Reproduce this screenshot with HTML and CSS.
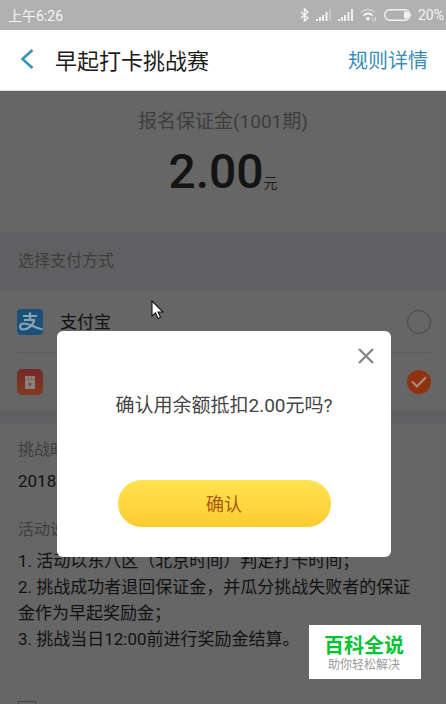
FILE: index.html
```html
<!DOCTYPE html>
<html lang="zh-CN">
<head>
<meta charset="utf-8">
<meta name="viewport" content="width=device-width, initial-scale=1">
<title>早起打卡挑战赛</title>
<link rel="stylesheet" href="styles.css">
</head>
<body>
<div class="status">
  <span class="status-time">上午6:26</span>
  <div class="status-icons">
    <svg width="10" height="14" viewBox="0 0 10 14" fill="none" stroke="#f2f2f2" stroke-width="1.5"><path d="M1 4l7 6-3.500 3V1L8 4l-7 6"/></svg>
    <svg width="16" height="12" viewBox="0 0 16 12" fill="#f2f2f2"><path d="M0 10h2v2H0zM3 8h2v4H3zM6 6h2v6H6z"/><path d="M9.500 3h2v9h-2z"/><path opacity=".35" d="M13 0h2v12h-2z"/></svg>
    <svg width="16" height="12" viewBox="0 0 16 12" fill="#f2f2f2"><path d="M0 10h2v2H0zM3 8h2v4H3zM6 6h2v6H6zM9.500 3h2v9h-2zM13 0h2v12h-2z"/></svg>
    <svg width="18" height="14" viewBox="0 0 18 14" fill="none" stroke="#f2f2f2" stroke-width="1.700"><path opacity=".4" d="M1 4.500Q8 -1.500 15 4.500"/><path d="M3.500 7.500Q8 3.500 12.500 7.500"/><path fill="#f2f2f2" stroke="none" d="M5.500 10Q8 8 10.500 10L8 13z"/><path opacity=".7" stroke-width="1" d="M13 9.500v4M12 12.500l1 1M15.500 13V9.500M15.500 9.500l1 1"/></svg>
    <svg width="28" height="12" viewBox="0 0 28 12"><rect x=".8" y=".8" width="25" height="10.400" rx="5" fill="none" stroke="#f2f2f2" stroke-width="1.400"/><path fill="#f2f2f2" d="M20 2.500h2q3 0 3 3.500t-3 3.500h-2zM26.500 4q1.500 2 0 4z"/></svg>
    <span>20%</span>
  </div>
</div>
<header class="nav">
  <button class="back" aria-label="返回"><svg width="14" height="20" viewBox="0 0 14 20" fill="none" stroke="#3a94b8" stroke-width="2.600"><path d="M12.500 1L2.500 10l10 9"/></svg></button>
  <h1 class="title">早起打卡挑战赛</h1>
  <a class="details" href="#rules">规则详情</a>
</header>
<main class="page">
  <section class="deposit">
    <p class="deposit-label">报名保证金(1001期)</p>
    <p class="deposit-sum"><strong>2.00</strong><span>元</span></p>
  </section>
  <h2 class="band">选择支付方式</h2>
  <div class="methods">
    <label class="method">
      <svg class="logo" width="26" height="26" viewBox="0 0 26 26"><rect width="26" height="26" rx="4" fill="#1b5179"/><g fill="none" stroke="#8ba4b4" stroke-width="2.200"><path d="M6 7h14M13 3.500V11M7 11h11"/><path d="M17.500 11C16 16 11 20.500 6.500 20.500C1.500 20.500 2 14.500 7 14.500C12 14.500 17 18.500 25.500 20.500"/></g></svg>
      <span class="method-name">支付宝</span>
      <input class="pick" type="radio" name="pay">
    </label>
    <label class="method">
      <svg class="logo" width="26" height="26" viewBox="0 0 26 26"><defs><linearGradient id="red" x2="0" y2="1"><stop stop-color="#74292a"/><stop offset="1" stop-color="#813b20"/></linearGradient></defs><rect width="26" height="26" rx="5" fill="url(#red)"/><path fill="#8c807e" d="M8 7h10v13H8z"/><path stroke="#84635f" stroke-width="1" d="M8 10.500h10M11.500 7v4M14.500 7v4"/><path fill="#744a42" d="M11.500 14h3v2h-1v1.500h-1V16h-1z"/></svg>
      <input class="pick" type="radio" name="pay" aria-label="余额" checked>
    </label>
  </div>
  <section class="info" id="rules">
    <h2 class="info-label">挑战时间</h2>
    <p class="info-text">2018.</p>
    <h2 class="info-label info-next">活动说明</h2>
    <p class="info-text">1. 活动以东八区（北京时间）判定打卡时间；<br>2. 挑战成功者退回保证金，并瓜分挑战失败者的保证金作为早起奖励金；<br>3. 挑战当日12:00前进行奖励金结算。</p>
    <input class="agree" type="checkbox" aria-label="同意">
  </section>
</main>
<div class="layer">
  <div class="dialog" role="dialog" aria-modal="true">
    <button class="close" aria-label="关闭"><svg width="16" height="16" viewBox="0 0 16 16" stroke="#888" stroke-width="2.400"><path d="M1 1l14 14M15 1L1 15"/></svg></button>
    <p class="question">确认用余额抵扣2.00元吗?</p>
    <button class="confirm">确认</button>
  </div>
</div>
<aside class="mark"><strong>百科全说</strong><span>助你轻松解决</span></aside>
<svg class="cursor" width="13" height="20" viewBox="0 0 13 20"><path d="M1 1v15l3.500-3.200L7 18.500l2.500-1.200L7 12h5z" fill="#fff" stroke="#111" stroke-width="1.100"/></svg>
</body>
</html>
```

FILE: styles.css
```css
* { box-sizing: border-box; margin: 0; padding: 0; }

body {
  height: 100vh;
  overflow: hidden;
  display: flex;
  flex-direction: column;
  background: #666;
  font-family: Roboto, "Noto Sans CJK SC", sans-serif;
  color: #1c1c1c;
}

h1, h2 { font-weight: 400; }
button { border: 0; background: none; font: inherit; cursor: pointer; }
svg { display: block; flex: none; }

.status {
  flex: none;
  height: 30px;
  padding: 0 2px 0 8px;
  display: flex;
  align-items: center;
  justify-content: space-between;
  background: #b0b0b0;
  color: #f5f5f5;
  font-size: 14px;
}
.status-icons { display: flex; align-items: center; gap: 6px; }

.nav {
  flex: none;
  height: 61px;
  padding: 0 18px 2px 20px;
  display: flex;
  align-items: center;
  background: #fff;
  border-bottom: 1px solid #ddd;
}
.back { width: 35px; height: 40px; display: flex; align-items: center; }
.title { flex: 1; font-size: 22px; }
.details { color: #3a8db5; font-size: 20px; text-decoration: none; }

.page { flex: 1; overflow: hidden; }

.deposit { height: 141px; padding-top: 17px; text-align: center; }
.deposit-label { font-size: 19px; line-height: 28px; color: #3d3d3d; }
.deposit-sum { line-height: 72px; }
.deposit-sum strong { font-size: 48px; font-weight: 500; color: #141414; }
.deposit-sum span { font-size: 14px; }

.band {
  height: 59px;
  padding: 0 18px;
  background: #606063;
  color: #3d3d3d;
  font-size: 16px;
  line-height: 58px;
}

.methods { padding: 0 15px 0 17px; border-bottom: 14px solid #606063; }
.method { height: 61px; display: flex; align-items: center; }
.method + .method { height: 58px; border-top: 1px solid #5a5a5a; }
.method-name { margin-left: 17px; padding-bottom: 2px; font-size: 17px; color: #111; }
.pick {
  appearance: none;
  width: 24px;
  height: 24px;
  margin-left: auto;
  border: 1px solid #454545;
  border-radius: 50%;
}
.pick:checked { border: 0; background: #8e3210; display: grid; place-items: center; }
.pick:checked::before {
  content: "";
  width: 12px;
  height: 6px;
  margin-bottom: 4px;
  border: solid #a58f84;
  border-width: 0 0 2px 2px;
  transform: rotate(-45deg);
}

.info { padding: 14px 30px 0 18px; }
.info-label { font-size: 16px; line-height: 24px; color: #3d3d3d; }
.info-next { margin-top: 24px; }
.info-text { margin-top: 6px; font-size: 17px; line-height: 26px; color: #111; }
.agree {
  appearance: none;
  display: block;
  width: 18px;
  height: 18px;
  margin-top: 49px;
  border: 1px solid #444;
}

.layer { position: fixed; inset: 0; padding: 331px 55px 0 57px; }
.dialog {
  padding: 17px 17px 30px;
  display: flex;
  flex-direction: column;
  align-items: center;
  background: #fff;
  border-radius: 6px;
}
.close { align-self: flex-end; }
.question { margin-top: 27px; font-size: 19px; line-height: 30px; color: #444; }
.confirm {
  width: 71%;
  height: 47px;
  margin-top: 59px;
  padding-bottom: 2px;
  border-radius: 24px;
  background: linear-gradient(#ffe350, #fdcb30);
  color: #a85a10;
  font-size: 18px;
}

.mark {
  position: fixed;
  right: 25px;
  bottom: 25px;
  width: 112px;
  height: 54px;
  padding: 4px 2px 0 0;
  display: flex;
  flex-direction: column;
  align-items: center;
  justify-content: center;
  background: #fff;
}
.mark strong { font-size: 20px; line-height: 22px; font-weight: 700; color: #00c432; }
.mark span { font-size: 12px; line-height: 16px; color: #999; }

.cursor { position: fixed; left: 151px; top: 300px; }
```
